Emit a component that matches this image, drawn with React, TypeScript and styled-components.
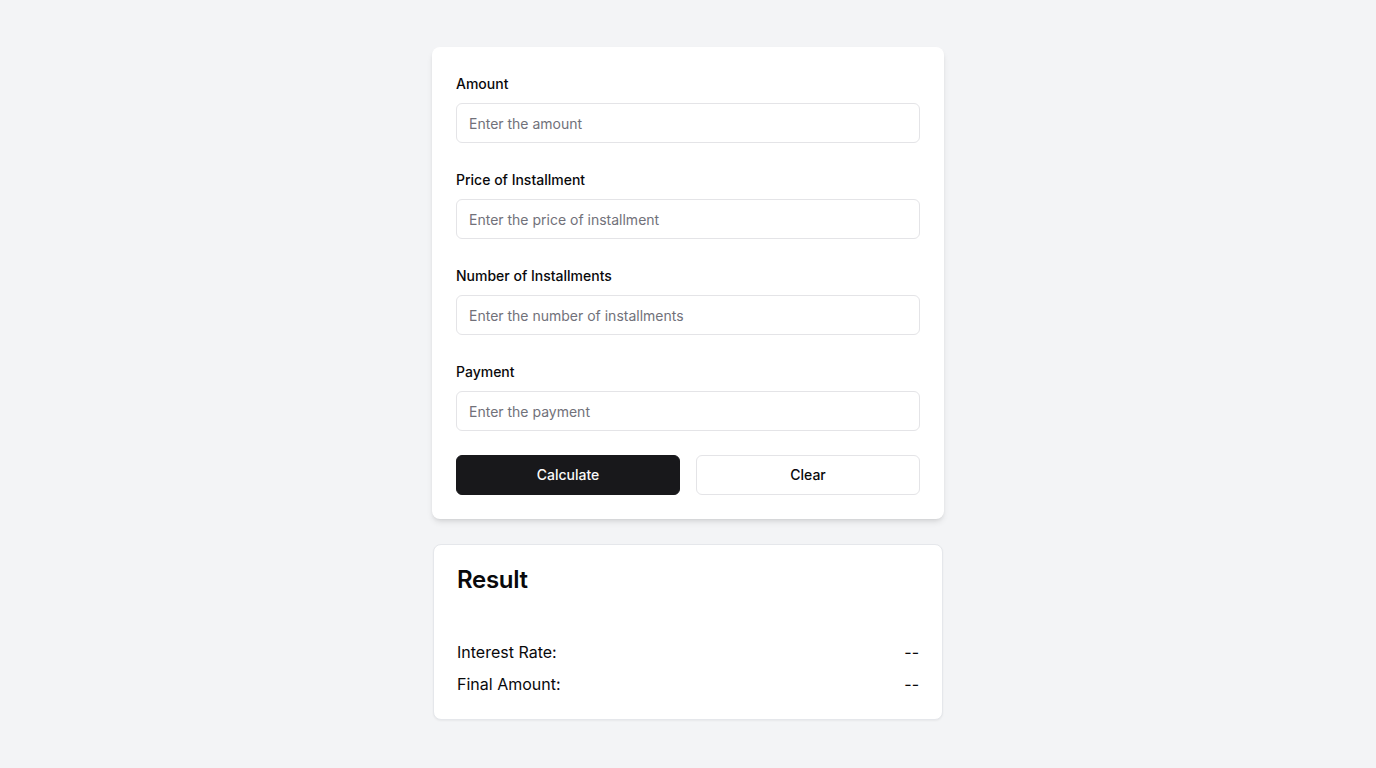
import React from 'react';
import styled, { createGlobalStyle } from 'styled-components';

const GlobalStyle = createGlobalStyle`
  html, body {
    margin: 0;
    padding: 0;
    background-color: #f3f4f6;
    font-family: Inter, "Liberation Sans", Arial, sans-serif;
    color: #09090b;
  }
  * {
    box-sizing: border-box;
  }
`;

const Page = styled.div`
  min-height: 100vh;
  display: flex;
  justify-content: center;
  padding: 47px 0 48px;
`;

const Column = styled.div`
  width: 512px;
  display: flex;
  flex-direction: column;
  gap: 25px;
`;

const FormCard = styled.form`
  background-color: #fff;
  border-radius: 8px;
  padding: 29px 24px 24px;
  box-shadow: 0 4px 6px -1px rgba(0, 0, 0, 0.1), 0 2px 4px -2px rgba(0, 0, 0, 0.1);
  display: flex;
  flex-direction: column;
  gap: 29px;
`;

const Field = styled.div`
  display: flex;
  flex-direction: column;
  gap: 11px;
`;

const Label = styled.label`
  font-size: 14px;
  font-weight: 500;
  line-height: 16px;
  color: #09090b;
`;

const Input = styled.input`
  height: 40px;
  width: 100%;
  border: 1px solid #e4e4e7;
  border-radius: 6px;
  padding: 0 12px;
  font-family: inherit;
  font-size: 14px;
  color: #09090b;
  background: #fff;
  outline: none;

  &::placeholder {
    color: #71717a;
  }
`;

const Actions = styled.div`
  display: grid;
  grid-template-columns: 1fr 1fr;
  gap: 16px;
  margin-top: -5px;
`;

const Button = styled.button<{ $variant?: 'primary' | 'outline' }>`
  height: 40px;
  padding: 0 0 2px;
  border-radius: 6px;
  font-family: inherit;
  font-size: 14px;
  font-weight: 500;
  cursor: pointer;
  border: 1px solid ${(p) => (p.$variant === 'outline' ? '#e4e4e7' : '#18181b')};
  background-color: ${(p) => (p.$variant === 'outline' ? '#fff' : '#18181b')};
  color: ${(p) => (p.$variant === 'outline' ? '#09090b' : '#fafafa')};
`;

const ResultCard = styled.div`
  margin: 0 1px;
  background-color: #fff;
  border: 1px solid #e5e7eb;
  border-radius: 8px;
  padding: 23px;
  box-shadow: 0 1px 2px rgba(0, 0, 0, 0.05);
`;

const ResultTitle = styled.h2`
  margin: 0 0 48px;
  font-size: 24px;
  font-weight: 600;
  line-height: 24px;
  letter-spacing: -0.3px;
`;

const Rows = styled.div`
  display: flex;
  flex-direction: column;
  gap: 8px;
`;

const Row = styled.div`
  display: flex;
  justify-content: space-between;
  font-size: 16px;
  line-height: 24px;
  color: #09090b;
`;

const fields = [
  { label: 'Amount', placeholder: 'Enter the amount' },
  { label: 'Price of Installment', placeholder: 'Enter the price of installment' },
  { label: 'Number of Installments', placeholder: 'Enter the number of installments' },
  { label: 'Payment', placeholder: 'Enter the payment' },
];

const App: React.FC = () => {
  return (
    <>
      <GlobalStyle />
      <Page>
        <Column>
          <FormCard onSubmit={(e) => e.preventDefault()}>
            {fields.map((f) => (
              <Field key={f.label}>
                <Label>{f.label}</Label>
                <Input type="text" placeholder={f.placeholder} />
              </Field>
            ))}
            <Actions>
              <Button type="submit">Calculate</Button>
              <Button type="button" $variant="outline">
                Clear
              </Button>
            </Actions>
          </FormCard>
          <ResultCard>
            <ResultTitle>Result</ResultTitle>
            <Rows>
              <Row>
                <span>Interest Rate:</span>
                <span>--</span>
              </Row>
              <Row>
                <span>Final Amount:</span>
                <span>--</span>
              </Row>
            </Rows>
          </ResultCard>
        </Column>
      </Page>
    </>
  );
};

export default App;
